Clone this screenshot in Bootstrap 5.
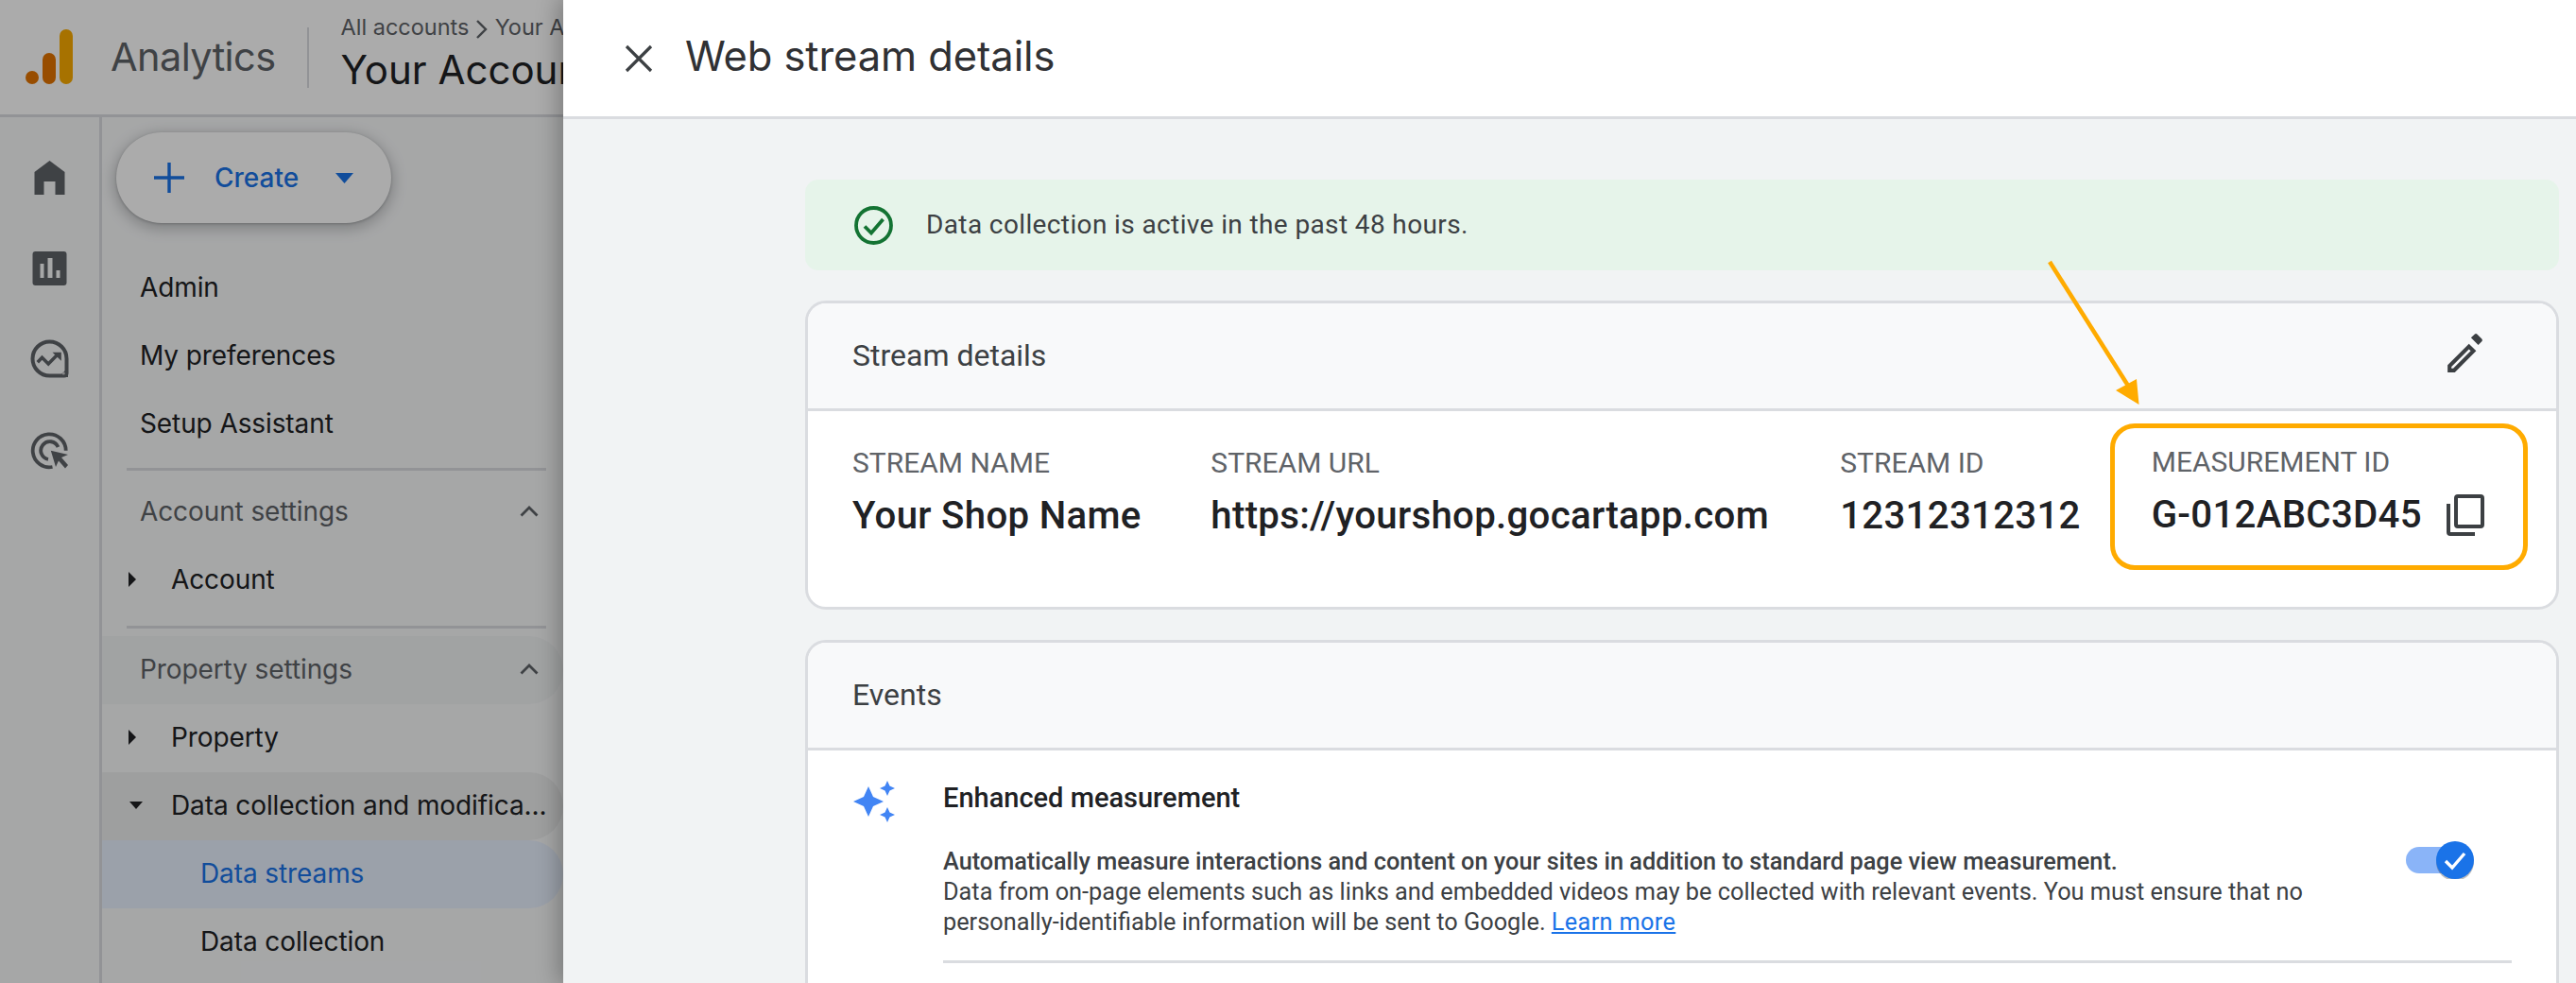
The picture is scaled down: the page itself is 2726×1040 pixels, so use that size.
<!doctype html>
<html lang="en">
<head>
<meta charset="utf-8">
<title>Web stream details</title>
<link href="https://cdn.jsdelivr.net/npm/bootstrap@5.3.0/dist/css/bootstrap.min.css" rel="stylesheet">
<style>
html,body{height:1040px;overflow:hidden;background:#fff}
body{font-family:Roboto,"Liberation Sans",sans-serif;color:#202124;position:relative}
.gsans{font-family:Inter,Roboto,sans-serif}
.ga-top{height:124px;border-bottom:3px solid #dadce0;padding-left:27px}
.ga-logo{width:50px;height:58px;margin-top:-2px}
.ga-brand{font-size:41.5px;color:#5f6368;margin-left:40px;letter-spacing:-.6px;padding-right:34px}
.ga-sep{width:2px;height:64px;background:#dadce0}
.ga-crumbs{margin-left:33px;white-space:nowrap}
.ga-crumb{font-size:23.5px;color:#5f6368;line-height:32px;margin-top:-6px}
.ga-acct{font-size:42px;line-height:57px;color:#202124}
.ga-body{height:916px;background:#f8f9fa}
.ga-rail{width:108px;flex:none;border-right:3px solid #dadce0;padding-top:43px;gap:54px}
.ga-rail svg{display:block;margin:0 auto;width:42px;height:42px}
.ga-nav{width:488px;flex:none}
.ga-create{width:291px;height:96px;margin:16px 0 31px 15px;border-radius:48px;background:#fff;box-shadow:0 4px 14px 3px rgba(60,64,67,.28),0 1px 3px rgba(60,64,67,.3);padding-left:40px;color:#1a73e8;font-size:28px;font-weight:500;gap:32px}
.ga-create-txt{margin-right:7px}
.ga-item{height:72px;font-size:28px;padding-left:40px;color:#202124;white-space:nowrap;letter-spacing:-.1px;padding-bottom:3px}
.ga-top-item{padding-bottom:0;padding-top:1px}
.ga-sub{color:#5f6368;justify-content:space-between;padding-right:26px}
.ga-line{height:3px;background:#dadce0;margin:12px 18px 8px 26px}
.ga-item.ga-nest{padding-left:28px;padding-right:12px}
.ga-nest svg{flex:none;width:18px;height:18px;margin-right:27px}
.ga-leaf{padding-left:104px}
.ga-hl{background:#f1f3f4;border-radius:0 36px 36px 0}
.ga-hl2{background:#eceded;border-radius:0 36px 36px 0}
.ga-active{background:#e8f0fe;color:#1a73e8;border-radius:0 36px 36px 0}
.ga-scrim{position:absolute;inset:0;background:rgba(0,0,0,.33)}
.ga-panel{position:absolute;left:596px;top:0;right:0;height:1040px;background:#f1f3f4;box-shadow:-3px 0 22px 2px rgba(0,0,0,.28);overflow:hidden}
.ga-phead{height:126px;background:#fff;border-bottom:3px solid #dadce0;padding-left:65px}
.ga-ptitle{font-size:43.5px;color:#303134;margin:0 0 4px 34px;font-weight:400;letter-spacing:-.1px}
.ga-content{padding:64px 18px 0 256px}
.ga-alert{height:96px;background:#e6f4ea;border-radius:14px;padding-left:52px;font-size:28px;letter-spacing:.38px;color:#3c4043;margin-bottom:32px;gap:35px}
.ga-card{background:#fff;border:3px solid #dadce0;border-radius:22px;margin-bottom:32px}
.ga-chead{height:114px;background:#f8f9fa;border-bottom:3px solid #dadce0;border-radius:19px 19px 0 0;padding:0 48px 2px 47px;font-size:32px;color:#3c4043}
.ga-pencil{margin-right:24px}
.ga-fields{height:207px;padding:15px 30px 0 47px}
.ga-field{padding-top:22px}
.ga-lab{font-size:30px;color:#5f6368;line-height:36px;white-space:nowrap}
.ga-val{font-size:40.2px;font-weight:500;line-height:56px;margin-top:10px;color:#202124;white-space:nowrap;letter-spacing:.3px}
.ga-f1{width:380px}.ga-f2{width:667px}.ga-f3{width:286px}
.ga-mid{border:5px solid #ffab00;border-radius:26px;width:443px;height:155px;margin-top:-2px;padding:18px 0 0 39px}
.ga-copy{margin:10px 0 0 26px;flex:none}
.ga-arrow{position:absolute;left:0;top:0;pointer-events:none}
.ga-ev{padding:32px 48px 80px 48px;gap:51px}
.ga-spark{flex:none}
.ga-evt{font-size:29px;font-weight:500;line-height:36px;color:#202124;white-space:nowrap}
.ga-desc{font-size:25.3px;line-height:32px;color:#3c4043;margin-top:34px;width:1600px}
.ga-desc b{font-weight:500}
.ga-desc a{color:#1a73e8;letter-spacing:.35px}
.ga-evline{height:3px;background:#dadce0;margin-top:24px;width:1660px}
.ga-switch{position:absolute;left:1691px;top:96px;width:72px;height:40px}
</style>
</head>
<body>
<header class="ga-top d-flex align-items-center">
  <svg class="ga-logo" viewBox="0 0 50 58"><rect x="36" y="0" width="14" height="58" rx="7" fill="#f9ab00"/><rect x="18" y="25" width="14" height="33" rx="7" fill="#e37400"/><circle cx="7" cy="51" r="7" fill="#e37400"/></svg>
  <div class="ga-brand gsans">Analytics</div>
  <div class="ga-sep"></div>
  <div class="ga-crumbs gsans">
    <div class="ga-crumb">All accounts <svg width="14" height="22" viewBox="0 0 14 22"><path d="M2 2l9 9-9 9" fill="none" stroke="#5f6368" stroke-width="2.4"/></svg> Your Account</div>
    <div class="ga-acct">Your Account</div>
  </div>
</header>
<div class="ga-body d-flex">
  <aside class="ga-rail d-flex flex-column">
    <svg viewBox="0 0 42 42"><path fill="#5f6368" d="M20.500 3 36.500 15V39H26.500V25H14.500V39H4.500V15z"/></svg>
    <svg viewBox="0 0 42 42"><path fill="#5f6368" fill-rule="evenodd" d="M5.500 3h30a3 3 0 0 1 3 3v30a3 3 0 0 1-3 3h-30a3 3 0 0 1-3-3V6a3 3 0 0 1 3-3zm5 13v15h4V16zm8-6v21h5V10zm9 13v8h4v-8z"/></svg>
    <svg viewBox="0 0 42 42"><path fill="none" stroke="#5f6368" stroke-width="4" d="M38.500 20.500a18 18 0 1 0-18 18H36a2.500 2.500 0 0 0 2.500-2.500z"/><path fill="#5f6368" d="M40 30v10H30z"/><circle cx="35.200" cy="36" r="1.600" fill="#c9cacb"/><path fill="none" stroke="#5f6368" stroke-width="3.500" d="M7.800 24.300l4.700-5 6.700 6.700 8.800-9"/><path fill="#5f6368" d="M23.500 13.700h9.300v9z"/></svg>
    <svg viewBox="0 0 42 42"><path fill="none" stroke="#5f6368" stroke-width="3.800" d="M23.500 39A17.500 17.500 0 1 1 37.700 21.700M19 31A9.500 9.500 0 1 1 29.500 18"/><path fill="#5f6368" d="M21.800 21.700 40 26l-7 3 7 8-3 3.500-7-8-3 6.500z"/></svg>
  </aside>
  <nav class="ga-nav gsans">
    <div class="ga-create d-flex align-items-center">
      <svg width="32" height="32" viewBox="0 0 32 32"><path d="M16 0v32M0 16h32" stroke="#1a73e8" stroke-width="3.400"/></svg>
      <span class="ga-create-txt">Create</span>
      <svg width="19" height="11" viewBox="0 0 19 11"><path d="M0 0h19L9.500 11z" fill="#1a73e8"/></svg>
    </div>
    <div class="ga-item ga-top-item d-flex align-items-center">Admin</div>
    <div class="ga-item ga-top-item d-flex align-items-center">My preferences</div>
    <div class="ga-item ga-top-item d-flex align-items-center">Setup Assistant</div>
    <div class="ga-line"></div>
    <div class="ga-item ga-sub d-flex align-items-center"><span>Account settings</span><svg width="20" height="12" viewBox="0 0 20 12"><path d="M1.500 10.500 10 2l8.500 8.500" fill="none" stroke="#5f6368" stroke-width="2.800"/></svg></div>
    <div class="ga-item ga-nest d-flex align-items-center"><svg viewBox="0 0 18 18"><path d="M0 1l8 8-8 8z" fill="#202124"/></svg>Account</div>
    <div class="ga-line"></div>
    <div class="ga-item ga-sub ga-hl d-flex align-items-center"><span>Property settings</span><svg width="20" height="12" viewBox="0 0 20 12"><path d="M1.500 10.500 10 2l8.500 8.500" fill="none" stroke="#5f6368" stroke-width="2.800"/></svg></div>
    <div class="ga-item ga-nest d-flex align-items-center"><svg viewBox="0 0 18 18"><path d="M0 1l8 8-8 8z" fill="#202124"/></svg>Property</div>
    <div class="ga-item ga-nest ga-hl2 d-flex align-items-center"><svg viewBox="0 0 18 18"><path d="M1 5h14l-7 8z" fill="#202124"/></svg><span>Data collection and modifica...</span></div>
    <div class="ga-item ga-leaf ga-active d-flex align-items-center">Data streams</div>
    <div class="ga-item ga-leaf d-flex align-items-center">Data collection</div>
  </nav>
</div>
<div class="ga-scrim"></div>
<section class="ga-panel">
  <div class="ga-phead d-flex align-items-center">
    <svg width="30" height="30" viewBox="0 0 30 30"><path d="M2 2l26 26M28 2 2 28" stroke="#3c4043" stroke-width="3.200" fill="none"/></svg>
    <h1 class="ga-ptitle gsans">Web stream details</h1>
  </div>
  <div class="ga-content">
    <div class="ga-alert d-flex align-items-center">
      <svg width="41" height="41" viewBox="0 0 41 41"><circle cx="20.500" cy="20.500" r="18.500" fill="none" stroke="#137333" stroke-width="3.800"/><path d="M11 21.500l7 7L30.500 14" fill="none" stroke="#137333" stroke-width="3.800"/></svg>
      <span>Data collection is active in the past 48 hours.</span>
    </div>
    <div class="ga-card">
      <div class="ga-chead d-flex align-items-center justify-content-between">
        <span>Stream details</span>
        <svg class="ga-pencil" width="49" height="49" viewBox="0 0 24 24"><path fill="#3c4043" d="M3 17.250V21h3.750L17.810 9.940l-3.750-3.750L3 17.250zM5.920 19H5v-.92l9.060-9.060.92.92L5.920 19zM20.710 5.040a.996.996 0 0 0 0-1.410l-2.340-2.340a.996.996 0 0 0-1.410 0l-1.830 1.830 3.750 3.750 1.830-1.830z"/></svg>
      </div>
      <div class="ga-fields d-flex">
        <div class="ga-field ga-f1"><div class="ga-lab">STREAM NAME</div><div class="ga-val">Your Shop Name</div></div>
        <div class="ga-field ga-f2"><div class="ga-lab">STREAM URL</div><div class="ga-val">https://yourshop.gocartapp.com</div></div>
        <div class="ga-field ga-f3"><div class="ga-lab">STREAM ID</div><div class="ga-val">12312312312</div></div>
        <div class="ga-mid">
          <div class="ga-lab">MEASUREMENT ID</div>
          <div class="d-flex align-items-center"><div class="ga-val">G-012ABC3D45</div>
          <svg class="ga-copy" width="40" height="44" viewBox="0 0 40 44"><path fill="none" stroke="#3c4043" stroke-width="4" d="M12 2h24a2 2 0 0 1 2 2v28a2 2 0 0 1-2 2H12a2 2 0 0 1-2-2V4a2 2 0 0 1 2-2zM2 10v30a2 2 0 0 0 2 2h26"/></svg></div>
        </div>
      </div>
    </div>
    <div class="ga-card">
      <div class="ga-chead d-flex align-items-center"><span>Events</span></div>
      <div class="ga-ev d-flex position-relative">
        <svg class="ga-spark" width="44" height="44" viewBox="0 0 44 44"><path fill="#4285f4" d="M16 6l5 11 11 5-11 5-5 11-5-11L0 22l11-5zM36 0l2.500 5.500L44 8l-5.500 2.500L36 16l-2.500-5.500L28 8l5.500-2.500zM36 28l2.500 5.500L44 36l-5.500 2.500L36 44l-2.500-5.500L28 36l5.500-2.500z"/></svg>
        <div>
          <div class="ga-evt">Enhanced measurement</div>
          <div class="ga-desc"><b>Automatically measure interactions and content on your sites in addition to standard page view measurement.</b><br>Data from on-page elements such as links and embedded videos may be collected with relevant events. You must ensure that no<br>personally-identifiable information will be sent to Google. <a href="#">Learn more</a></div>
          <div class="ga-evline"></div>
        </div>
        <svg class="ga-switch" viewBox="0 0 72 40"><rect x="0" y="6" width="54" height="28" rx="14" fill="#8ab4f8"/><circle cx="52" cy="22" r="20" fill="rgba(0,0,0,.25)"/><circle cx="52" cy="20" r="20" fill="#1a73e8"/><path d="M42 21l7 7 13-15" fill="none" stroke="#fff" stroke-width="3.400"/></svg>
      </div>
    </div>
  </div>
  <svg class="ga-arrow" width="2130" height="1040" viewBox="596 0 2130 1040"><path d="M2169 277 2252 408" stroke="#ffab00" stroke-width="4.500" fill="none"/><path d="M2263.500 428 2239 413 2261 401z" fill="#ffab00"/></svg>
</section>
<script src="https://cdn.jsdelivr.net/npm/bootstrap@5.3.0/dist/js/bootstrap.bundle.min.js"></script>
</body>
</html>
